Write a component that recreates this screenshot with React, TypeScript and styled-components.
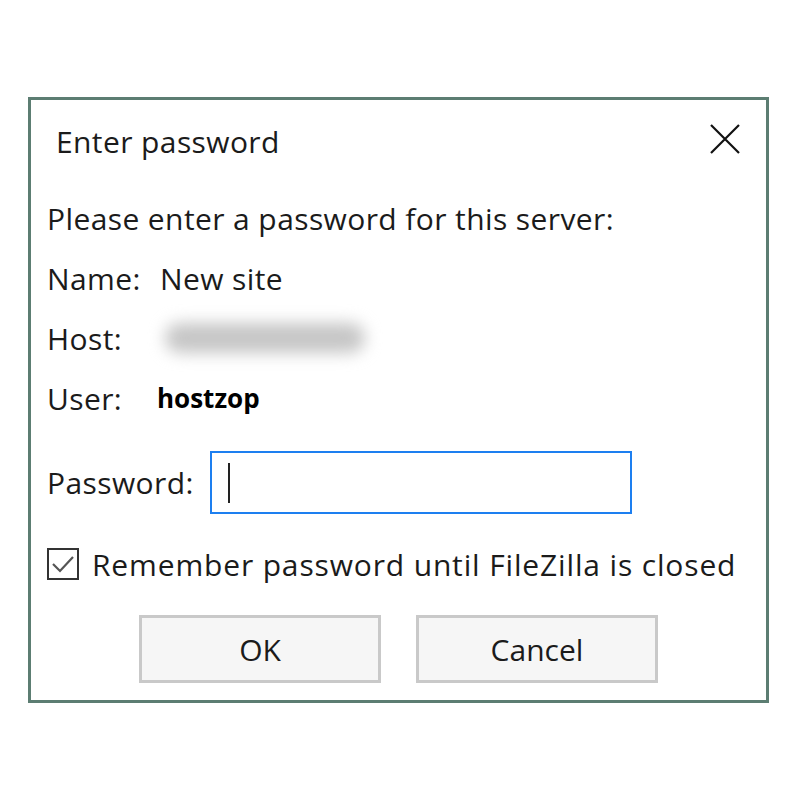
import styled, { createGlobalStyle } from "styled-components";

const GlobalStyle = createGlobalStyle`
  html, body {
    margin: 0;
    padding: 0;
    background: #ffffff;
  }
  body {
    font-family: "Open Sans", "Noto Sans", sans-serif;
    color: #1b1b1b;
  }
`;

const Page = styled.div`
  padding: 97px 0 0 28px;
`;

const Dialog = styled.div`
  width: 735px;
  height: 600px;
  border: 3px solid #5c7d72;
  background: #ffffff;
  display: flex;
  flex-direction: column;
`;

const TitleBar = styled.div`
  height: 82px;
  display: flex;
  align-items: center;
  justify-content: space-between;
  padding: 0 24px 6px 25px;
`;

const Title = styled.span`
  font-size: 30px;
  letter-spacing: 0.4px;
`;

const CloseButton = styled.div`
  width: 34px;
  height: 34px;
  margin-top: -4px;
  display: flex;
  align-items: center;
  justify-content: center;
`;

const Body = styled.div`
  display: flex;
  flex-direction: column;
  padding: 0 16px;
`;

const Line = styled.div`
  height: 60px;
  display: flex;
  align-items: center;
  font-size: 30px;
  letter-spacing: 0.4px;
`;

const Label = styled.span`
  width: 113px;
  flex-shrink: 0;
`;

const Value = styled.span<{ bold?: boolean }>`
  font-size: ${(p) => (p.bold ? "26px" : "30px")};
  font-weight: ${(p) => (p.bold ? 700 : 400)};
  color: ${(p) => (p.bold ? "#000" : "inherit")};
  letter-spacing: ${(p) => (p.bold ? "0" : "0.4px")};
  margin-left: ${(p) => (p.bold ? "-3px" : "0")};
`;

const Blurred = styled.div`
  width: 200px;
  height: 30px;
  margin-left: 5px;
  border-radius: 15px;
  background: #c6c6c6;
  filter: blur(8px);
`;

const PasswordRow = styled.div`
  margin-top: 23px;
  height: 63px;
  display: flex;
  align-items: center;
  font-size: 30px;
  letter-spacing: 0.4px;
`;

const PasswordLabel = styled.span`
  width: 163px;
  flex-shrink: 0;
`;

const Input = styled.div`
  width: 402px;
  height: 59px;
  border: 2px solid #1d7ff0;
  display: flex;
  align-items: center;
  padding-left: 16px;
  box-sizing: content-box;
`;

const Caret = styled.div`
  width: 2px;
  height: 40px;
  background: #222;
`;

const CheckRow = styled.label`
  margin-top: 34px;
  height: 32px;
  display: flex;
  align-items: center;
  gap: 13px;
  font-size: 30px;
  letter-spacing: 0.85px;
`;

const Box = styled.div`
  width: 28px;
  height: 28px;
  border: 2px solid #333;
  display: flex;
  align-items: center;
  justify-content: center;
`;

const Buttons = styled.div`
  margin-top: 35px;
  display: flex;
  justify-content: center;
  gap: 35px;
`;

const Button = styled.div`
  width: 236px;
  height: 62px;
  border: 3px solid #c9c9c9;
  background: #f6f6f6;
  display: flex;
  align-items: center;
  justify-content: center;
  font-size: 30px;
`;

const App = () => {
  return (
    <>
      <GlobalStyle />
      <Page>
        <Dialog>
          <TitleBar>
            <Title>Enter password</Title>
            <CloseButton>
              <svg width="30" height="30" viewBox="0 0 30 30">
                <path d="M1 1 L29 29 M29 1 L1 29" stroke="#111" strokeWidth="2.2" />
              </svg>
            </CloseButton>
          </TitleBar>
          <Body>
            <Line>Please enter a password for this server:</Line>
            <Line>
              <Label>Name:</Label>
              <Value>New site</Value>
            </Line>
            <Line>
              <Label>Host:</Label>
              <Blurred />
            </Line>
            <Line>
              <Label>User:</Label>
              <Value bold>hostzop</Value>
            </Line>
            <PasswordRow>
              <PasswordLabel>Password:</PasswordLabel>
              <Input>
                <Caret />
              </Input>
            </PasswordRow>
            <CheckRow>
              <Box>
                <svg width="24" height="20" viewBox="0 0 24 20">
                  <path d="M2 10 L9 17 L22 3" fill="none" stroke="#555" strokeWidth="2.2" />
                </svg>
              </Box>
              Remember password until FileZilla is closed
            </CheckRow>
            <Buttons>
              <Button>OK</Button>
              <Button>Cancel</Button>
            </Buttons>
          </Body>
        </Dialog>
      </Page>
    </>
  );
};

export default App;
